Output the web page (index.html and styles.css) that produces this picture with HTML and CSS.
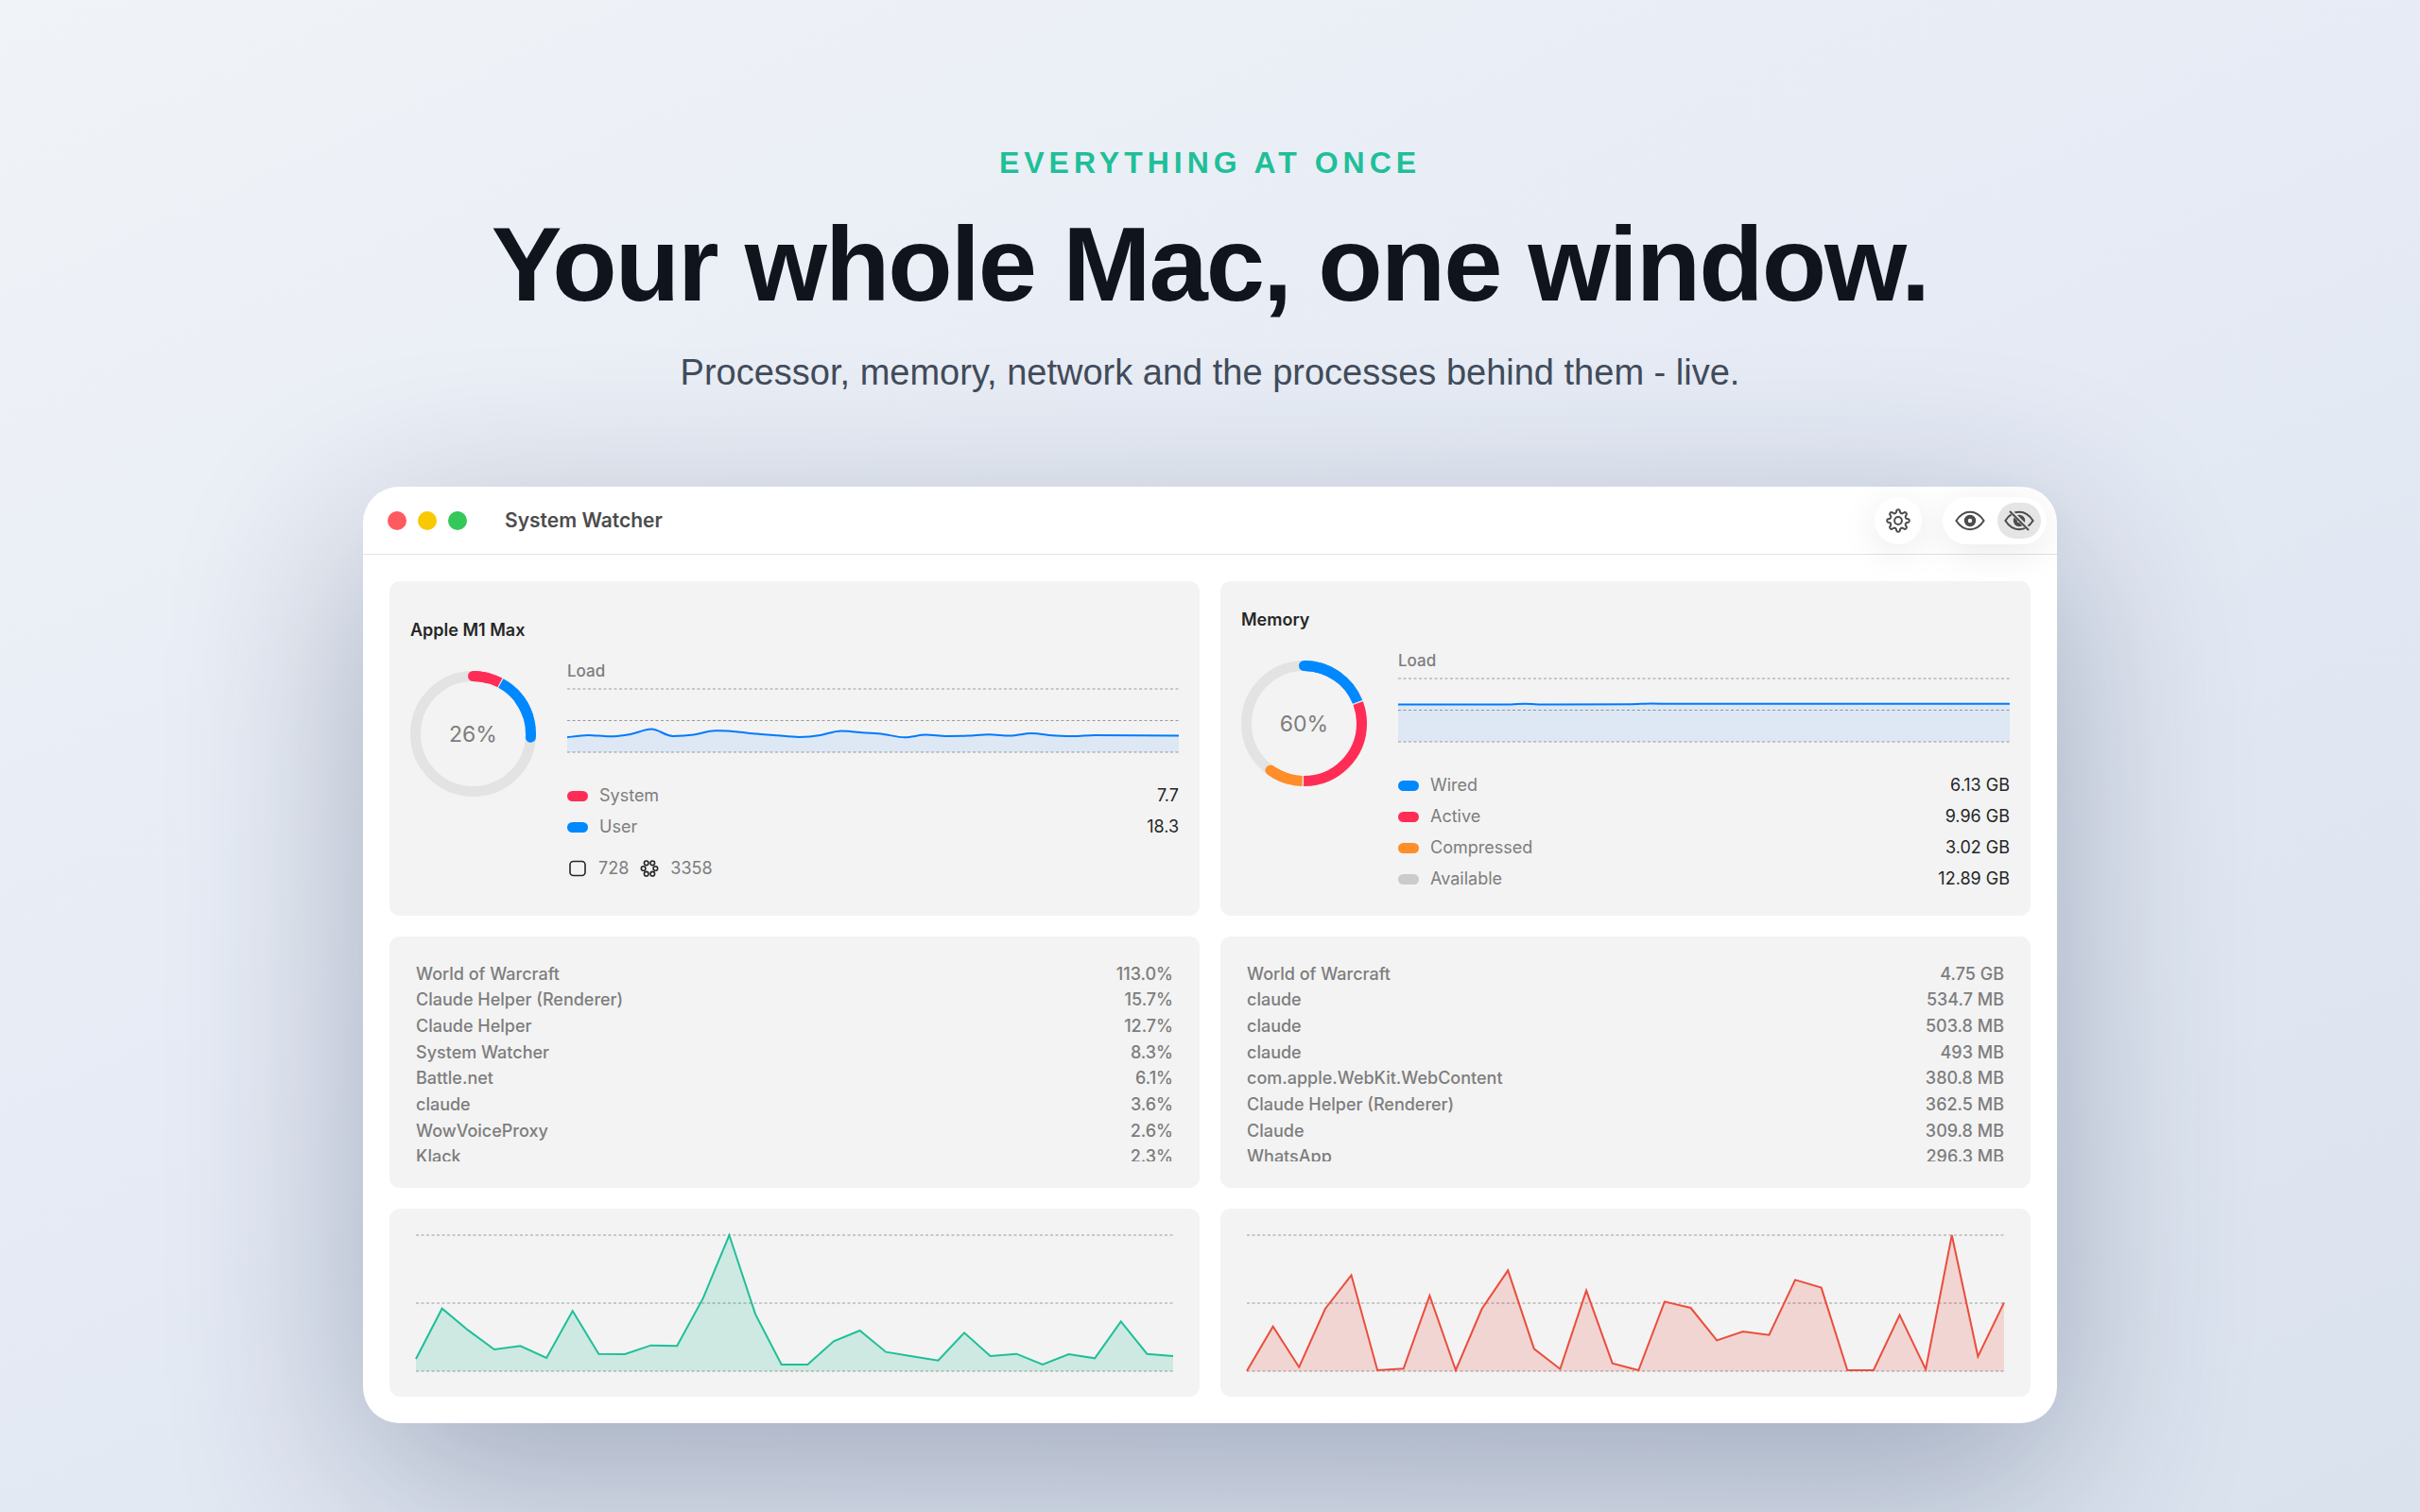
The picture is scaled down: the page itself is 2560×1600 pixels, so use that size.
FILE: index.html
```
<!DOCTYPE html>
<html lang="en">

<head>
	<title>System Watcher</title>
	<meta charset="utf-8" />
	<meta name="viewport" content="width=device-width,initial-scale=1" />
	<link rel="stylesheet" href="styles.css">
</head>

<body>
	<header class="hero">
		<p class="eyebrow">Everything at once</p>
		<h1>Your whole Mac, one window.</h1>
		<p class="tagline">Processor, memory, network and the processes behind them - live.</p>
	</header>

	<main class="window">
		<div class="titlebar">
			<div class="lights">
				<span class="light close"></span>
				<span class="light minimize"></span>
				<span class="light expand"></span>
			</div>
			<h2>System Watcher</h2>
			<div class="toolbar">
				<button class="round" aria-label="Settings">
					<svg class="gear" viewBox="-13 -13 26 26">
						<path d="M-2.2-8.7A12 12 0 0 0-1.6-11A2 2 0 0 1 1.6-11A12 12 0 0 0 2.2-8.7A2.2 2.2 0 0 0 4.6-7.7L6.65-8.9A2 2 0 0 1 8.9-6.65L7.7-4.6A2.2 2.2 0 0 0 8.7-2.2L11-1.6A2 2 0 0 1 11 1.6L8.7 2.2A2.2 2.2 0 0 0 7.7 4.6L8.9 6.65A2 2 0 0 1 6.65 8.9L4.6 7.7A2.2 2.2 0 0 0 2.2 8.7L1.6 11A2 2 0 0 1-1.6 11L-2.2 8.7A2.2 2.2 0 0 0-4.6 7.7L-6.65 8.9A2 2 0 0 1-8.9 6.65L-7.7 4.6A2.2 2.2 0 0 0-8.7 2.2L-11 1.6A2 2 0 0 1-11-1.6L-8.7-2.2A2.2 2.2 0 0 0-7.7-4.6L-8.9-6.65A2 2 0 0 1-6.65-8.9L-4.6-7.7A2.2 2.2 0 0 0-2.2-8.7Z" />
						<circle r="3.9" />
					</svg>
				</button>
				<div class="segment">
					<button aria-label="Show">
						<svg class="eye" viewBox="-16 -12 32 24">
							<path d="M-14.6 0C-11-5.6-5.6-9.2 0-9.2S11-5.6 14.6 0C11 5.6 5.6 9.2 0 9.2S-11 5.6-14.6 0Z" />
							<circle class="iris" r="4.2" />
						</svg>
					</button>
					<button class="active" aria-label="Hide">
						<svg class="eye" viewBox="-16 -12 32 24">
							<path d="M-14.6 0C-11-5.6-5.6-9.2 0-9.2S11-5.6 14.6 0C11 5.6 5.6 9.2 0 9.2S-11 5.6-14.6 0Z" />
							<circle class="iris" r="4.2" />
							<path class="slash-gap" d="M-9.5-10.5L10.5 9.5" />
							<path class="slash" d="M-10-10L10 10" />
						</svg>
					</button>
				</div>
			</div>
		</div>

		<div class="grid">
			<section class="card overview">
				<h3>Apple M1 Max</h3>
				<div class="stats">
					<svg class="ring" viewBox="0 0 133 133">
						<circle class="track" cx="66.5" cy="66.5" r="61" />
						<g transform="rotate(-90 66.5 66.5)">
							<circle class="blue cap" cx="66.5" cy="66.5" r="61" pathLength="100" stroke-dasharray="11 100" stroke-dashoffset="-15" />
							<circle class="blue" cx="66.5" cy="66.5" r="61" pathLength="100" stroke-dasharray="12 100" stroke-dashoffset="-8" />
							<circle class="red cap" cx="66.5" cy="66.5" r="61" pathLength="100" stroke-dasharray="4 100" />
							<circle class="red" cx="66.5" cy="66.5" r="61" pathLength="100" stroke-dasharray="7.7 100" />
						</g>
						<text x="66.5" y="75">26%</text>
					</svg>
					<div class="details">
						<p class="label">Load</p>
						<svg class="load" viewBox="0 0 870 200" preserveAspectRatio="none">
							<path class="area" d="M0 153C10 150 20 146 30 146S50 150 60 150S80 147 90 143S110 127 120 127S140 149 150 149S170 148 180 145S200 132 210 132S230 133 240 135S260 140 270 142S290 145 300 147S320 152 330 152S350 150 360 146S380 133 390 133S410 136 420 138S440 140 450 143S470 153 480 153S500 145 510 145S530 149 540 149S560 149 570 148S590 144 600 144S620 148 630 148S650 140 660 140S680 145 690 147S710 149 720 149S740 146 750 146S840 147 870 148V200H0Z" />
							<path class="grid-line" d="M0 0H870M0 100H870M0 200H870" />
							<path class="line" d="M0 153C10 150 20 146 30 146S50 150 60 150S80 147 90 143S110 127 120 127S140 149 150 149S170 148 180 145S200 132 210 132S230 133 240 135S260 140 270 142S290 145 300 147S320 152 330 152S350 150 360 146S380 133 390 133S410 136 420 138S440 140 450 143S470 153 480 153S500 145 510 145S530 149 540 149S560 149 570 148S590 144 600 144S620 148 630 148S650 140 660 140S680 145 690 147S710 149 720 149S740 146 750 146S840 147 870 148" />
						</svg>
						<dl class="legend">
							<div><dt class="red">System</dt><dd>7.7</dd></div>
							<div><dt class="blue">User</dt><dd>18.3</dd></div>
						</dl>
						<div class="counters">
							<svg viewBox="-11 -11 22 22"><rect x="-8" y="-7.5" width="16" height="15" rx="3.5" /></svg>
							<span>728</span>
							<svg viewBox="-11 -11 22 22">
								<circle cx="-3.3" cy="-5.7" r="2.3" />
								<circle cx="3.3" cy="-5.7" r="2.3" />
								<circle cx="6.4" cy="0" r="2.3" />
								<circle cx="3.3" cy="5.7" r="2.3" />
								<circle cx="-3.3" cy="5.7" r="2.3" />
								<circle cx="-6.4" cy="0" r="2.3" />
							</svg>
							<span>3358</span>
						</div>
					</div>
				</div>
			</section>

			<section class="card overview">
				<h3>Memory</h3>
				<div class="stats">
					<svg class="ring" viewBox="0 0 133 133">
						<circle class="track" cx="66.5" cy="66.5" r="61" />
						<g transform="rotate(-90 66.5 66.5)">
							<circle class="blue cap" cx="66.5" cy="66.5" r="61" pathLength="100" stroke-dasharray="10 100" />
							<circle class="blue" cx="66.5" cy="66.5" r="61" pathLength="100" stroke-dasharray="18.9 100" />
							<circle class="red" cx="66.5" cy="66.5" r="61" pathLength="100" stroke-dasharray="30.8 100" stroke-dashoffset="-19.3" />
							<circle class="orange cap" cx="66.5" cy="66.5" r="61" pathLength="100" stroke-dasharray="5.9 100" stroke-dashoffset="-54" />
							<circle class="orange" cx="66.5" cy="66.5" r="61" pathLength="100" stroke-dasharray="8 100" stroke-dashoffset="-50.5" />
						</g>
						<text x="66.5" y="75">60%</text>
					</svg>
					<div class="details">
						<p class="label">Load</p>
						<svg class="load" viewBox="0 0 870 200" preserveAspectRatio="none">
							<path class="area" d="M0 82H150L180 80L210 82L330 81L360 79L390 80H870V200H0Z" />
							<path class="grid-line" d="M0 0H870M0 100H870M0 200H870" />
							<path class="line" d="M0 82H150C160 82 170 80 180 80S200 82 210 82L330 81C340 81 350 79 360 79S380 80 390 80H870" />
						</svg>
						<dl class="legend">
							<div><dt class="blue">Wired</dt><dd>6.13 GB</dd></div>
							<div><dt class="red">Active</dt><dd>9.96 GB</dd></div>
							<div><dt class="orange">Compressed</dt><dd>3.02 GB</dd></div>
							<div><dt class="gray">Available</dt><dd>12.89 GB</dd></div>
						</dl>
					</div>
				</div>
			</section>

			<section class="card processes">
				<div class="scroll">
					<table>
						<tr><td>World of Warcraft</td><td>113.0%</td></tr>
						<tr><td>Claude Helper (Renderer)</td><td>15.7%</td></tr>
						<tr><td>Claude Helper</td><td>12.7%</td></tr>
						<tr><td>System Watcher</td><td>8.3%</td></tr>
						<tr><td>Battle.net</td><td>6.1%</td></tr>
						<tr><td>claude</td><td>3.6%</td></tr>
						<tr><td>WowVoiceProxy</td><td>2.6%</td></tr>
						<tr><td>Klack</td><td>2.3%</td></tr>
					</table>
				</div>
			</section>

			<section class="card processes">
				<div class="scroll">
					<table>
						<tr><td>World of Warcraft</td><td>4.75 GB</td></tr>
						<tr><td>claude</td><td>534.7 MB</td></tr>
						<tr><td>claude</td><td>503.8 MB</td></tr>
						<tr><td>claude</td><td>493 MB</td></tr>
						<tr><td>com.apple.WebKit.WebContent</td><td>380.8 MB</td></tr>
						<tr><td>Claude Helper (Renderer)</td><td>362.5 MB</td></tr>
						<tr><td>Claude</td><td>309.8 MB</td></tr>
						<tr><td>WhatsApp</td><td>296.3 MB</td></tr>
					</table>
				</div>
			</section>

			<section class="card network">
				<svg class="traffic down" viewBox="0 0 290 432" preserveAspectRatio="none">
					<polygon class="area" points="0,393 10,233 20,302 30,363 40,352 50,390 60,241 70,377 80,378 90,350 100,352 110,200 120,0 130,251 140,411 150,411 160,337 170,303 180,371 190,385 200,398 210,310 220,384 230,377 240,411 250,378 260,391 270,274 280,377 290,384 290,432 0,432" />
					<path class="grid-line" d="M0 0H290M0 216H290M0 432H290" />
					<polyline class="line" points="0,393 10,233 20,302 30,363 40,352 50,390 60,241 70,377 80,378 90,350 100,352 110,200 120,0 130,251 140,411 150,411 160,337 170,303 180,371 190,385 200,398 210,310 220,384 230,377 240,411 250,378 260,391 270,274 280,377 290,384" />
				</svg>
			</section>

			<section class="card network">
				<svg class="traffic up" viewBox="0 0 290 432" preserveAspectRatio="none">
					<polygon class="area" points="0,431 10,290 20,419 30,234 40,127 50,429 60,424 70,192 80,429 90,234 100,112 110,361 120,425 130,176 140,407 150,429 160,211 170,231 180,334 190,306 200,317 210,142 220,167 230,429 240,429 250,254 260,426 270,0 280,385 290,214 290,432 0,432" />
					<path class="grid-line" d="M0 0H290M0 216H290M0 432H290" />
					<polyline class="line" points="0,431 10,290 20,419 30,234 40,127 50,429 60,424 70,192 80,429 90,234 100,112 110,361 120,425 130,176 140,407 150,429 160,211 170,231 180,334 190,306 200,317 210,142 220,167 230,429 240,429 250,254 260,426 270,0 280,385 290,214" />
				</svg>
			</section>
		</div>
	</main>
</body>

</html>
```
FILE: styles.css
```
:root {
	--blue: #0088ff;
	--red: #ff2d55;
	--orange: #ff8d28;
	--gray: #cbcbcb;
	--text: #262626;
	--muted: #7d7d7d;
	--card: #f3f3f3;
	--gap: 22px;
	--padding: 28px;
}

*,
*:before,
*:after {
	box-sizing: border-box;
	margin: 0;
	padding: 0;
}

body {
	min-height: 100vh;
	padding: 152px 0 94px;
	background: linear-gradient(155deg, #f0f3f7 0%, #e6ebf5 45%, #dae2ee 100%);
	font-family: Inter, "Liberation Sans", sans-serif;
	font-size: 18px;
	line-height: 22px;
	color: var(--text);
}

/* headline */
.hero {
	font-family: "Liberation Sans", Arial, sans-serif;
	text-align: center;
}

.eyebrow {
	color: #1fbf98;
	font-size: 32px;
	font-weight: bold;
	line-height: 40px;
	letter-spacing: 5px;
	text-transform: uppercase;
}

h1 {
	margin-top: 22px;
	color: #10141d;
	font-size: 112px;
	line-height: 132px;
	letter-spacing: -2px;
}

.tagline {
	margin-top: 24px;
	color: #414b5a;
	font-size: 38px;
	line-height: 48px;
}

/* app window */
.window {
	width: 70%;
	margin: 97px auto 0;
	border-radius: 38px;
	background-color: white;
	box-shadow: 0 60px 200px rgba(30, 45, 80, 0.33);
}

.titlebar {
	position: relative;
	display: flex;
	align-items: center;
	height: 72px;
	padding: 0 11px 0 26px;
	border-bottom: 1px solid #e3e3e3;
}

.lights {
	display: flex;
	gap: 12px;
}

.light {
	width: 20px;
	height: 20px;
	border-radius: 50%;
}

.close {
	background-color: #ff5a5f;
}

.minimize {
	background-color: #fac800;
}

.expand {
	background-color: #34c759;
}

h2 {
	margin-left: 40px;
	color: #4c4c4c;
	font-size: 21px;
	font-weight: 600;
}

.toolbar {
	display: flex;
	gap: var(--gap);
	margin-left: auto;
}

.round,
.segment {
	height: 50px;
	border-radius: 25px;
	background-color: white;
	box-shadow: 0 8px 40px rgba(0, 0, 0, 0.09);
}

.segment {
	display: flex;
	align-items: center;
	gap: 6px;
	padding: 0 6px;
}

button {
	display: flex;
	align-items: center;
	justify-content: center;
	border: none;
	background: none;
	cursor: pointer;
}

.round {
	width: 50px;
}

.segment button {
	width: 46px;
	height: 38px;
	border-radius: 19px;
}

.segment .active {
	background-color: #e5e5e5;
}

.gear,
.eye {
	fill: none;
	stroke: #4c4c4c;
	stroke-width: 2;
}

.gear {
	width: 26px;
	height: 26px;
}

.eye {
	width: 32px;
	height: 24px;
}

.iris {
	stroke-width: 4;
}

.eye .slash-gap {
	stroke: #e5e5e5;
	stroke-width: 4;
}

/* cards */
.grid {
	display: grid;
	grid-template-columns: repeat(2, minmax(0, 1fr));
	gap: var(--gap);
	padding: var(--padding);
}

.card {
	border-radius: 11px;
	background-color: var(--card);
}

.overview {
	display: flex;
	flex-direction: column;
	justify-content: center;
	padding: 30px var(--gap) 28px;
}

h3 {
	margin-bottom: 21px;
	font-size: 18px;
	font-weight: 600;
}

.stats {
	display: flex;
	gap: 33px;
}

.ring {
	flex: none;
	width: 133px;
	height: 133px;
	margin-top: 11px;
}

.ring circle {
	fill: none;
	stroke-width: 11;
}

.ring .track {
	stroke: #e3e3e3;
}

.ring .blue {
	stroke: var(--blue);
}

.ring .red {
	stroke: var(--red);
}

.ring .orange {
	stroke: var(--orange);
}

.ring .cap {
	stroke-linecap: round;
}

.ring text {
	fill: var(--muted);
	font-size: 23px;
	text-anchor: middle;
}

.details {
	flex: 1;
	min-width: 0;
}

.label {
	color: var(--muted);
	font-size: 17px;
	font-weight: 500;
}

.load,
.traffic {
	display: block;
	width: 100%;
	overflow: visible;
	color: #007aff;
}

.load {
	height: 67px;
	margin: 8px 0 35px;
}

.area {
	fill: currentColor;
	fill-opacity: 0.09;
}

.line {
	fill: none;
	stroke: currentColor;
	stroke-width: 2;
	vector-effect: non-scaling-stroke;
}

.grid-line {
	fill: none;
	stroke: rgba(0, 0, 0, 0.36);
	stroke-width: 1;
	stroke-dasharray: 3 2.5;
	vector-effect: non-scaling-stroke;
}

.legend {
	display: grid;
	gap: 11px;
}

.legend div {
	display: flex;
	justify-content: space-between;
}

.legend dt {
	display: flex;
	align-items: center;
	gap: 12px;
	color: var(--muted);
}

.legend dt:before {
	content: "";
	width: 22px;
	height: 11px;
	border-radius: 6px;
}

.legend .blue:before {
	background-color: var(--blue);
}

.legend .red:before {
	background-color: var(--red);
}

.legend .orange:before {
	background-color: var(--orange);
}

.legend .gray:before {
	background-color: var(--gray);
}

.counters {
	display: flex;
	gap: 11px;
	margin-top: var(--gap);
	color: var(--muted);
}

.counters svg {
	width: 22px;
	height: 22px;
	fill: none;
	stroke: var(--text);
	stroke-width: 1.6;
}

.processes {
	padding: 26px var(--padding) var(--padding);
}

.scroll {
	height: 212px;
	overflow: hidden;
}

table {
	width: 100%;
	height: 221px;
	border-collapse: collapse;
	color: var(--muted);
	font-weight: 500;
}

td:last-child {
	text-align: right;
}

.network {
	padding: var(--padding) var(--padding) 27px;
}

.traffic {
	height: 144px;
}

.traffic .area {
	fill-opacity: 0.18;
}

.down {
	color: #1fbf98;
}

.up {
	color: #eb4d3d;
}
```
